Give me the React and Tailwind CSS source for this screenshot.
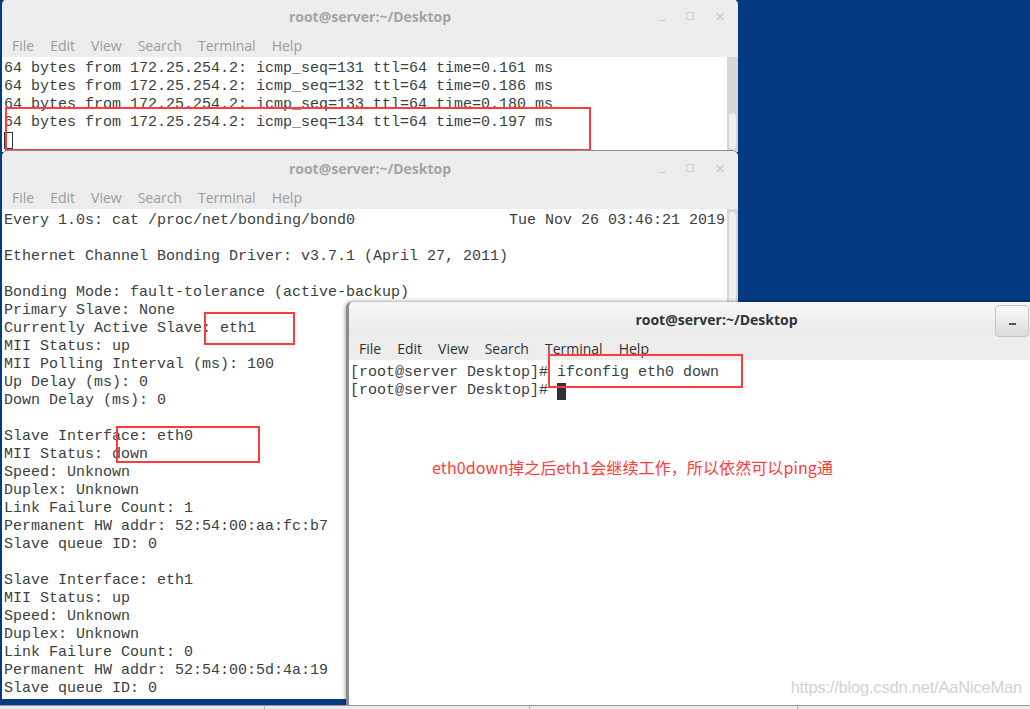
import React from "react";

const MENU = ["File", "Edit", "View", "Search", "Terminal", "Help"];

const win2Lines = [
  "",
  "Ethernet Channel Bonding Driver: v3.7.1 (April 27, 2011)",
  "",
  "Bonding Mode: fault-tolerance (active-backup)",
  "Primary Slave: None",
  "Currently Active Slave: eth1",
  "MII Status: up",
  "MII Polling Interval (ms): 100",
  "Up Delay (ms): 0",
  "Down Delay (ms): 0",
  "",
  "Slave Interface: eth0",
  "MII Status: down",
  "Speed: Unknown",
  "Duplex: Unknown",
  "Link Failure Count: 1",
  "Permanent HW addr: 52:54:00:aa:fc:b7",
  "Slave queue ID: 0",
  "",
  "Slave Interface: eth1",
  "MII Status: up",
  "Speed: Unknown",
  "Duplex: Unknown",
  "Link Failure Count: 0",
  "Permanent HW addr: 52:54:00:5d:4a:19",
  "Slave queue ID: 0",
];

const pingLines = [
  "64 bytes from 172.25.254.2: icmp_seq=131 ttl=64 time=0.161 ms",
  "64 bytes from 172.25.254.2: icmp_seq=132 ttl=64 time=0.186 ms",
  "64 bytes from 172.25.254.2: icmp_seq=133 ttl=64 time=0.180 ms",
  "64 bytes from 172.25.254.2: icmp_seq=134 ttl=64 time=0.197 ms",
];

const mono = "font-['Liberation_Mono',monospace] text-[15px] leading-[18px] text-[#3a3f41]";

function Line({ children }) {
  return <div className="h-[18px] whitespace-pre">{children}</div>;
}

function TitleBar({ active }) {
  return (
    <div
      className={
        "relative h-[34px] flex items-center justify-center rounded-t-[6px] " +
        (active ? "bg-gradient-to-b from-[#f7f7f7] to-[#ebebeb]" : "bg-[#ededed]")
      }
    >
      <span
        className={
          "font-['Open_Sans',sans-serif] text-[14px] font-bold " +
          (active ? "text-[#2e3436]" : "text-[#a4a4a4]")
        }
      >
        root@server:~/Desktop
      </span>
      {active ? (
        <div className="absolute left-[646px] top-[3px] w-[34px] h-[32px] rounded-[4px] border border-[#c4c4c4] bg-gradient-to-b from-[#fafafa] to-[#dcdcdc] flex items-center justify-center">
          <span className="block w-[7px] h-[2px] bg-[#555] mt-[6px]" />
        </div>
      ) : (
        <div className="absolute right-[12px] top-[11px] flex items-center gap-[20px] text-[#c8c8c8]">
          <span className="block w-[7px] h-[1px] bg-[#cfcfcf] mt-[8px]" />
          <span className="block w-[8px] h-[8px] border border-[#cfcfcf]" />
          <span className="text-[14px] leading-[12px] font-['DejaVu_Sans',sans-serif]">×</span>
        </div>
      )}
    </div>
  );
}

function MenuBar({ active }) {
  return (
    <div
      className={
        "h-[24px] flex items-center gap-[16px] pl-[10px] bg-[#ededed] font-['Open_Sans',sans-serif] text-[14px] " +
        (active ? "text-[#2e3436]" : "text-[#9c9c9c]")
      }
    >
      {MENU.map((m) => (
        <span key={m}>{m}</span>
      ))}
    </div>
  );
}

function RedBox({ className }) {
  return <div className={"absolute border-2 border-[#ff3b3b] " + className} />;
}

export default function App() {
  return (
    <div className="relative w-[1030px] h-[709px] overflow-hidden bg-[#043a83]">
      {/* window 1 - ping */}
      <div className="absolute left-[2px] top-[-1px] w-[736px] h-[153px] bg-[#ededed] rounded-t-[6px] flex flex-col">
        <TitleBar />
        <MenuBar />
        <div className="relative flex-1 flex bg-white">
          <div className={"flex-1 pl-[2px] pt-[3px] " + mono}>
            {pingLines.map((l, i) => (
              <Line key={i}>{l}</Line>
            ))}
            <div className="w-[9px] h-[17px] border border-[#2e3436]" />
          </div>
          <div className="w-[11px] bg-[#d6d6d6] flex flex-col justify-end pb-[3px] items-center">
            <div className="w-[7px] h-[36px] rounded-full bg-[#f0f0f0]" />
          </div>
        </div>
      </div>
      <RedBox className="left-[5px] top-[107px] w-[586px] h-[44px]" />

      {/* window 2 - watch bonding */}
      <div className="absolute left-[2px] top-[151px] w-[736px] h-[548px] bg-[#ededed] rounded-t-[6px] flex flex-col shadow-[0_-1px_0_#8a8a8a]">
        <TitleBar />
        <MenuBar />
        <div className="relative flex-1 flex bg-white">
          <div className={"flex-1 pl-[2px] pt-[3px] " + mono}>
            <div className="h-[18px] flex justify-between pr-[2px] whitespace-pre">
              <span>Every 1.0s: cat /proc/net/bonding/bond0</span>
              <span>Tue Nov 26 03:46:21 2019</span>
            </div>
            {win2Lines.map((l, i) => (
              <Line key={i}>{l}</Line>
            ))}
          </div>
          <div className="w-[11px] bg-[#d6d6d6] flex flex-col pt-[3px] items-center">
            <div className="w-[7px] h-[400px] rounded-full bg-[#f0f0f0]" />
          </div>
        </div>
      </div>
      <RedBox className="left-[204px] top-[312px] w-[91px] h-[33px]" />
      <RedBox className="left-[116px] top-[426px] w-[144px] h-[37px]" />

      {/* window 3 - active terminal */}
      <div className="absolute left-[346px] top-[302px] w-[738px] h-[404px] bg-[#ededed] rounded-t-[6px] flex flex-col border-l-[3px] border-[#8c8c8c] shadow-[0_0_4px_rgba(0,0,0,0.5)]">
        <TitleBar active />
        <MenuBar active />
        <div className="relative flex-1 bg-white">
          <div className={"pl-[1px] pt-[4px] " + mono}>
            <Line>[root@server Desktop]# ifconfig eth0 down</Line>
            <div className="h-[18px] whitespace-pre flex items-center">
              <span>[root@server Desktop]# </span>
              <span className="inline-block w-[9px] h-[17px] bg-[#2e3436]" />
            </div>
          </div>
          <div className="absolute left-[83px] top-[97px] font-['Noto_Sans_CJK_SC',sans-serif] text-[16px] leading-[20px] text-[#ff3b3b] whitespace-nowrap tracking-[0.1px]">
            eth0down掉之后eth1会继续工作，所以依然可以ping通
          </div>
          <div className="absolute right-[62px] bottom-[6px] font-['Liberation_Sans',sans-serif] text-[16.5px] text-[#d2d2d2] whitespace-nowrap tracking-[-0.2px]">
            https://blog.csdn.net/AaNiceMan
          </div>
        </div>
      </div>
      <RedBox className="left-[548px] top-[354px] w-[195px] h-[34px]" />

      {/* taskbar */}
      <div className="absolute left-0 right-0 bottom-0 h-[4px] bg-[#eaeaea] border-t border-[#9a9a9a] flex">
        <div className="w-[265px] border-r border-[#b0b0b0]" />
        <div className="w-[265px] border-r border-[#b0b0b0]" />
        <div className="w-[268px] border-r border-[#b0b0b0]" />
      </div>
    </div>
  );
}
